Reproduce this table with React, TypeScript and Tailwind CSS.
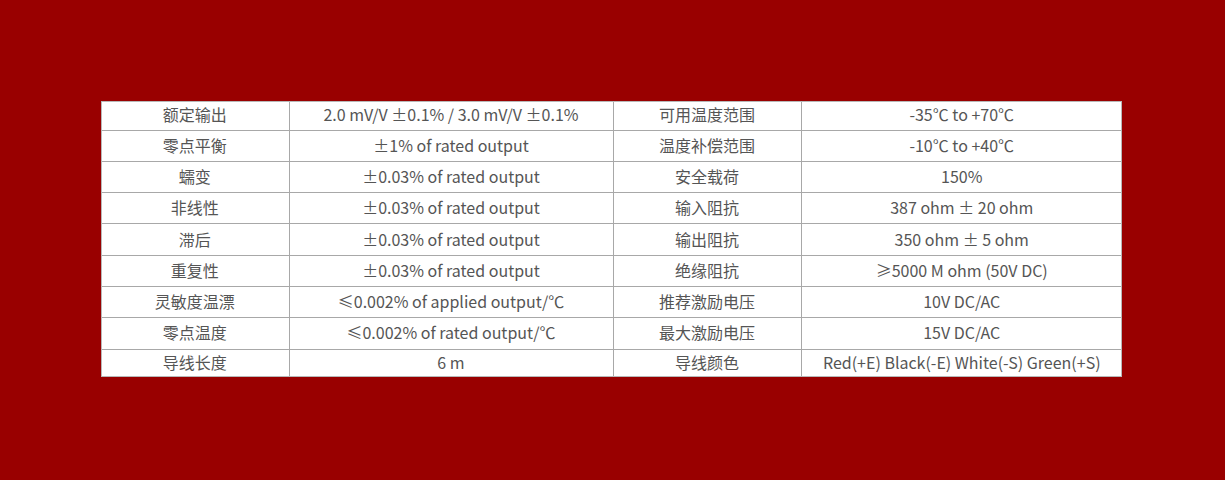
import React from 'react';

const rows: [string, string, string, string][] = [
  ['额定输出', '2.0 mV/V ±0.1% / 3.0 mV/V ±0.1%', '可用温度范围', '-35℃ to +70℃'],
  ['零点平衡', '±1% of rated output', '温度补偿范围', '-10℃ to +40℃'],
  ['蠕变', '±0.03% of rated output', '安全载荷', '150%'],
  ['非线性', '±0.03% of rated output', '输入阻抗', '387 ohm ± 20 ohm'],
  ['滞后', '±0.03% of rated output', '输出阻抗', '350 ohm ± 5 ohm'],
  ['重复性', '±0.03% of rated output', '绝缘阻抗', '≥5000 M ohm (50V DC)'],
  ['灵敏度温漂', '≤0.002% of applied output/℃', '推荐激励电压', '10V DC/AC'],
  ['零点温度', '≤0.002% of rated output/℃', '最大激励电压', '15V DC/AC'],
  ['导线长度', '6 m', '导线颜色', 'Red(+E) Black(-E) White(-S) Green(+S)'],
];

// first and last rows are a little shorter in the design
const rowHeights = [
  'h-[29px]',
  'h-[31.3px]',
  'h-[31.3px]',
  'h-[31.3px]',
  'h-[31.3px]',
  'h-[31.3px]',
  'h-[31.3px]',
  'h-[31.3px]',
  'h-[28px]',
];

const App: React.FC = () => {
  return (
    <div
      className="w-[1225px] h-[480px] bg-[#990000] pt-[101px]"
      style={{ fontFamily: '"Noto Sans CJK SC", "Noto Sans", sans-serif' }}
    >
      <table className="ml-[101px] bg-white border-collapse border-hidden table-fixed w-[1021px] text-[16px] text-[#555555] outline outline-1 outline-[#b8b8b8] -outline-offset-1">
        <colgroup>
          <col className="w-[188px]" />
          <col className="w-[324px]" />
          <col className="w-[188px]" />
          <col className="w-[321px]" />
        </colgroup>
        <tbody>
          {rows.map((r, i) => (
            <tr key={i} className={rowHeights[i]}>
              {r.map((c, j) => (
                <td
                  key={j}
                  className="border border-[#a8a8a8] text-center align-middle p-0 pb-[2px] leading-[24px] whitespace-nowrap"
                >
                  {c}
                </td>
              ))}
            </tr>
          ))}
        </tbody>
      </table>
    </div>
  );
};

export default App;
